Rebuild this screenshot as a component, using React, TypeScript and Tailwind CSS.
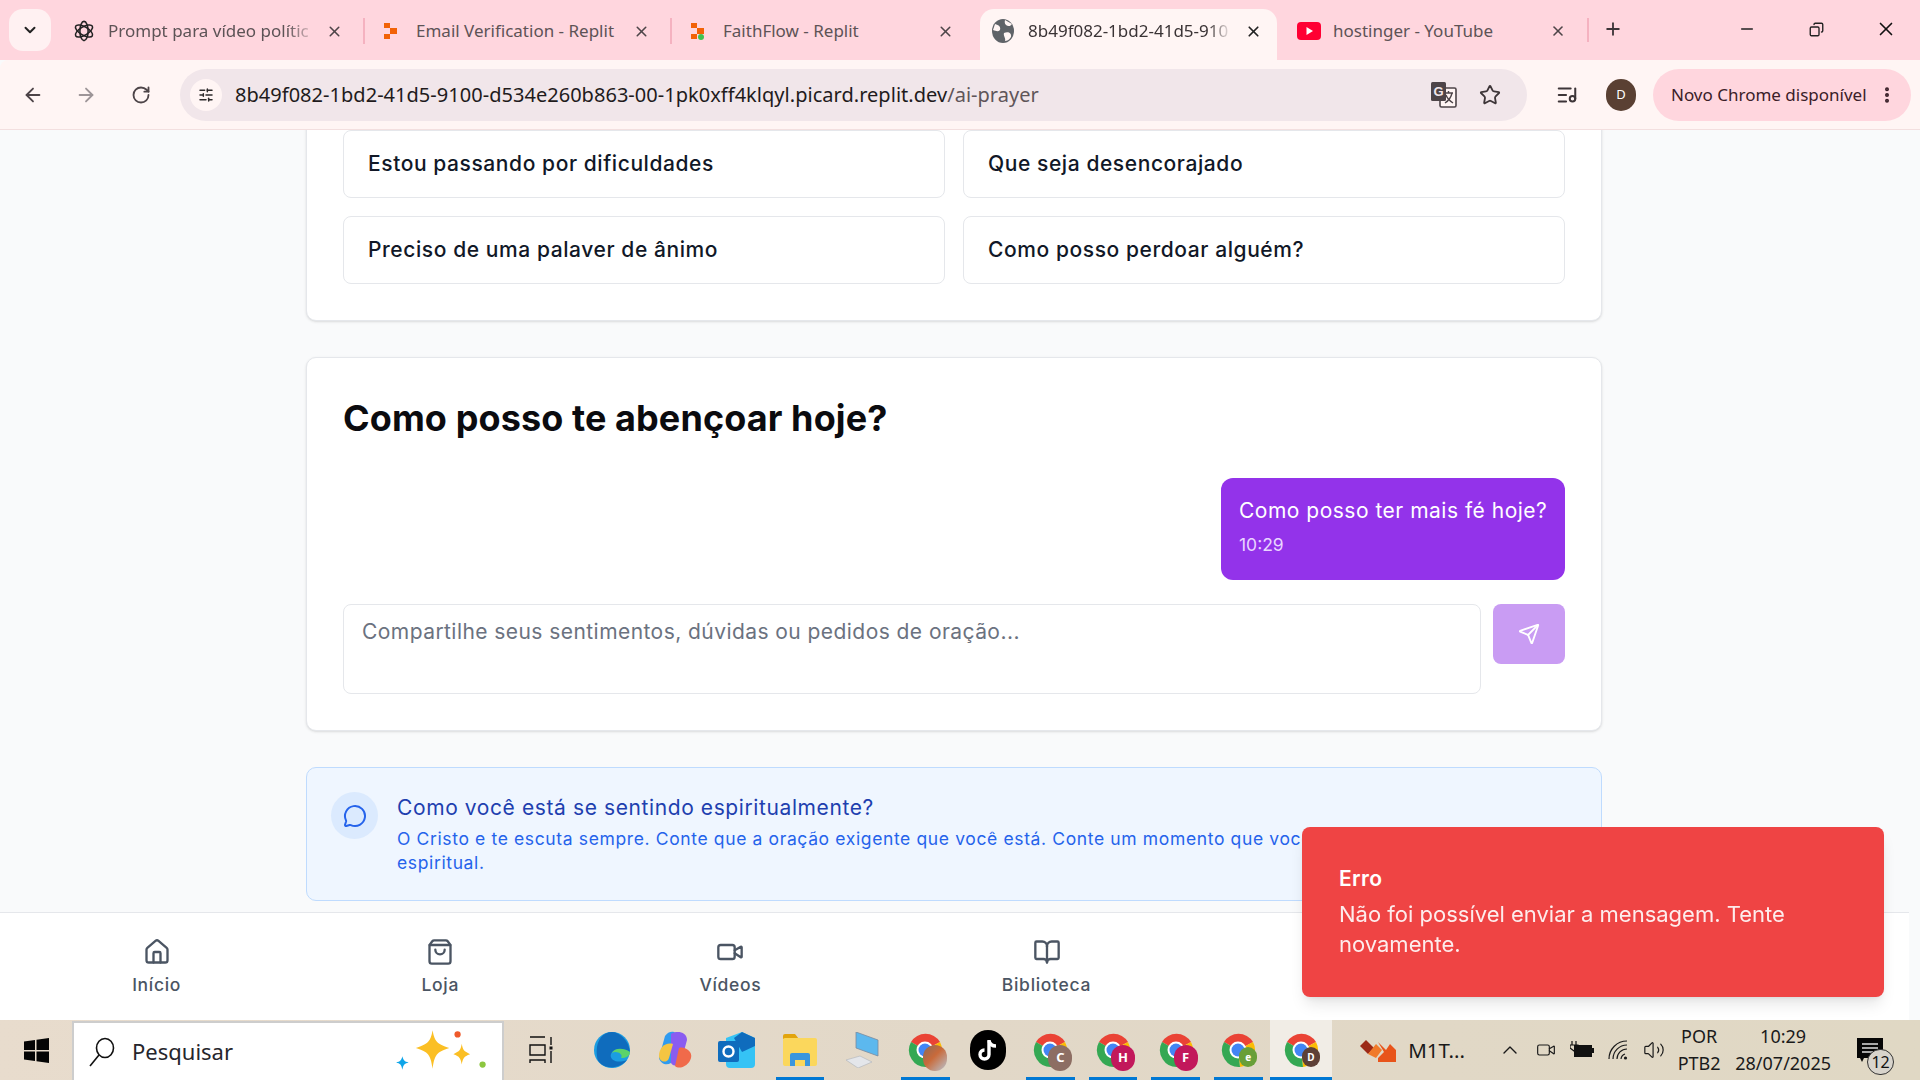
import React from "react";
import { Home, ShoppingBag, Video, BookOpen, MessageCircle, Send, ChevronDown, ArrowLeft, ArrowRight, RotateCw, X, Plus, Minus, Star, MoreVertical, ChevronUp, Volume2, SlidersHorizontal, ListMusic, Copy } from "lucide-react";

function ReplitLogo({ dot }: { dot?: boolean }) {
  return (
    <svg width="16" height="18" viewBox="0 0 16 18" className="shrink-0">
      <rect x="1" y="1" width="6" height="5" fill="#f26207" />
      <rect x="7" y="6" width="7" height="6" fill="#f26207" />
      <rect x="1" y="12" width="6" height="5" fill="#f26207" />
      {dot && <circle cx="11" cy="15" r="3" fill="#3fc24f" />}
    </svg>
  );
}

function OpenAILogo() {
  return (
    <svg width="22" height="24" viewBox="0 0 24 24" fill="none" stroke="#222" strokeWidth="1.7" className="shrink-0">
      <ellipse cx="12" cy="12" rx="4.5" ry="10.5" />
      <ellipse cx="12" cy="12" rx="4.5" ry="10.5" transform="rotate(60 12 12)" />
      <ellipse cx="12" cy="12" rx="4.5" ry="10.5" transform="rotate(120 12 12)" />
    </svg>
  );
}

function Tab({ icon, title, fade, sep, w, gap }: { icon: React.ReactNode; title: string; fade?: boolean; sep?: boolean; w: string; gap: string }) {
  return (
    <div className={`relative flex items-center h-[44px] ${w}`}>
      {icon}
      <span className={`${gap} flex-1 overflow-hidden whitespace-nowrap text-[17px] text-[#5d5356]`} style={fade ? { maskImage: "linear-gradient(to right, black 85%, transparent)" } : undefined}>{title}</span>
      <X size={17} strokeWidth={2.2} className="shrink-0 ml-[8px] mr-[2px] text-[#4d4448]" />
      {sep && <div className="absolute right-[-20px] top-[9px] h-[26px] w-[2px] bg-[#f5b2c0]" />}
    </div>
  );
}

function ChromeIcon({ letter, color, small, photo }: { letter?: string; color?: string; small?: boolean; photo?: boolean }) {
  return (
    <div className="relative w-[36px] h-[36px] shrink-0">
      <svg width="36" height="36" viewBox="0 0 36 36">
        <path d="M18 18 L4 10 A17 17 0 0 1 33 10 Z" fill="#ea4335" />
        <path d="M18 18 L33 10 A17 17 0 0 1 20 35 Z" fill="#fbbc04" />
        <path d="M18 18 L20 35 A17 17 0 0 1 4 10 Z" fill="#34a853" />
        <circle cx="18" cy="18" r="8.5" fill="#fff" />
        <circle cx="18" cy="18" r="6.5" fill="#4285f4" />
      </svg>
      {(letter || photo) && (
        <div className={`absolute flex items-center justify-center rounded-full text-white font-bold ${small ? "w-[18px] h-[20px] right-[-1px] bottom-[1px] text-[10px]" : "w-[24px] h-[26px] right-[-4px] bottom-[-3px] text-[13px]"}`} style={{ background: photo ? "linear-gradient(135deg,#8a6a5a,#c96a3a 45%,#b8c4d0)" : color }}>{letter}</div>
      )}
    </div>
  );
}

function TaskSlot({ children, line, active }: { children: React.ReactNode; line?: boolean; active?: boolean }) {
  return (
    <div className={`relative flex items-center justify-center h-full shrink-0 w-[62.6px] ${active ? "bg-[#f1ede6]" : ""}`}>
      {children}
      {line && <div className="absolute bottom-0 left-[7px] right-[7px] h-[3px] bg-[#0078d4]" style={active ? { left: 0, right: 0 } : undefined} />}
    </div>
  );
}

function NavItem({ icon, label, w }: { icon: React.ReactNode; label: string; w?: string }) {
  return (
    <div className={`flex flex-col items-center gap-[8px] text-[#4b5563] ${w ?? ""}`}>
      {icon}
      <span className="text-[17.5px] leading-[22px] font-medium tracking-[0.7px] whitespace-nowrap">{label}</span>
    </div>
  );
}

function TrayIcon({ children }: { children: React.ReactNode }) {
  return <div className="w-[36px] flex items-center justify-center shrink-0">{children}</div>;
}

const heading = { fontFamily: "Inter, sans-serif" };

export default function App() {
  return (
    <div className="w-[1920px] h-[1080px] overflow-hidden flex flex-col bg-[#f9fafb] relative" style={{ fontFamily: "'Noto Sans', sans-serif" }}>
      {/* tab strip */}
      <div className="h-[60px] bg-[#ffd6de] flex shrink-0 relative">
        <div className="absolute left-[9px] top-[9px] w-[42px] h-[42px] bg-[#fff1f2] rounded-[14px] flex items-center justify-center">
          <ChevronDown size={18} strokeWidth={2.6} className="text-[#222]" />
        </div>
        <div className="flex items-center ml-[73px] h-[44px] gap-[38px] mt-[9px]">
          <Tab w="w-[272px]" gap="ml-[13px]" icon={<OpenAILogo />} title="Prompt para vídeo polític" fade sep />
          <Tab w="w-[269px]" gap="ml-[17px]" icon={<ReplitLogo />} title="Email Verification - Replit" sep />
          <Tab w="w-[266px]" gap="ml-[17px]" icon={<ReplitLogo dot />} title="FaithFlow - Replit" />
        </div>
        <div className="absolute left-[980px] top-[9px] w-[297px] h-[51px] bg-[#fff5f4] rounded-t-[14px] flex items-center pl-[12px] pr-[15px] pb-[7px]">
          <svg width="22" height="24" viewBox="0 0 22 24" className="shrink-0">
            <ellipse cx="11" cy="12" rx="11" ry="12" fill="#5f6368" />
            <path d="M3 5 C7 6 9 8 8 11 C6 13 4 12 1 11 Z M13 1 C12 5 14 7 18 7 L20 5 Z M12 14 C16 12 20 14 19 18 C17 21 15 22 13 22 C14 19 11 17 12 14 Z" fill="#fff5f4" />
          </svg>
          <span className="ml-[14px] w-[204px] overflow-hidden whitespace-nowrap text-[17px] text-[#3a3335]" style={{ maskImage: "linear-gradient(to right, black 88%, transparent)" }}>8b49f082-1bd2-41d5-910</span>
          <span className="flex-1" />
          <X size={17} strokeWidth={2.4} className="shrink-0 text-[#222]" />
        </div>
        <div className="absolute left-[1297px] top-[15px] h-[32px] w-[271px] flex items-center">
          <svg width="24" height="18" viewBox="0 0 24 18" className="shrink-0"><rect width="24" height="18" rx="4" fill="#ff0033" /><path d="M9.5 5 L16 9 L9.5 13 Z" fill="#fff" /></svg>
          <span className="ml-[12px] text-[17px] text-[#5d5356] flex-1 whitespace-nowrap">hostinger - YouTube</span>
          <X size={16} strokeWidth={2.4} className="mr-[2px] text-[#4d4448]" />
        </div>
        <div className="absolute left-[1587px] top-[18px] w-[2px] h-[24px] bg-[#f5b2c0]" />
        <Plus size={20} strokeWidth={2.2} className="absolute left-[1603px] top-[19px] text-[#3d3538]" />
        <Minus size={18} strokeWidth={2.2} className="absolute left-[1738px] top-[20px] text-[#222]" />
        <Copy size={15} strokeWidth={2.2} className="absolute left-[1809px] top-[22px] text-[#222] -scale-x-100" />
        <X size={22} strokeWidth={1.8} className="absolute left-[1875px] top-[18px] text-[#111]" />
      </div>
      {/* toolbar */}
      <div className="h-[70px] bg-[#fff5f4] shrink-0 flex items-center border-b border-[#f3dfdf] rounded-tl-[8px]">
        <ArrowLeft size={22} strokeWidth={2} className="ml-[22px] text-[#4d4448]" />
        <ArrowRight size={22} strokeWidth={2} className="ml-[31px] text-[#9d9598]" />
        <RotateCw size={20} strokeWidth={2.2} className="ml-[34px] text-[#4d4448]" />
        <div className="ml-[29px] w-[1347px] h-[52px] rounded-full bg-[#f1e6ea] flex items-center pl-[10px] pr-[26px]">
          <div className="w-[32px] h-[32px] rounded-full bg-[#fff5f4] flex items-center justify-center shrink-0">
            <SlidersHorizontal size={16} strokeWidth={2.2} className="text-[#2d2a2b]" />
          </div>
          <span className="ml-[13px] flex-1 text-[20px] tracking-[0.03px] whitespace-nowrap text-[#1f1b1c]">8b49f082-1bd2-41d5-9100-d534e260b863-00-1pk0xff4klqyl.picard.replit.dev<span className="text-[#5f5559]">/ai-prayer</span></span>
          <svg width="27" height="27" viewBox="0 0 27 27" className="mr-[22px] shrink-0">
            <rect x="10" y="7" width="16" height="19" rx="1.5" fill="#fff5f4" stroke="#4d4448" strokeWidth="1.6" />
            <path d="M14 12 H23 M18.5 10 V12 M22 12 C21 17 18 20 15 22 M16 14 C17 17 20 20 23 22" stroke="#4d4448" strokeWidth="1.4" fill="none" />
            <rect x="1" y="1" width="15" height="19" rx="1.5" fill="#4d4448" />
            <text x="8.5" y="15" textAnchor="middle" fontSize="13" fontWeight="700" fill="#f1e6ea" fontFamily="'Liberation Sans', sans-serif">G</text>
          </svg>
          <Star size={22} strokeWidth={2} className="text-[#3d3538]" />
        </div>
        <ListMusic size={22} strokeWidth={2.2} className="ml-[29px] text-[#3d3538]" />
        <div className="ml-[28px] w-[30px] h-[32px] rounded-full bg-[#5a4033] text-white text-[13px] flex items-center justify-center">D</div>
        <div className="ml-[17px] w-[258px] h-[52px] rounded-full bg-[#ffd6de] flex items-center pl-[18px] text-[17px] text-[#3a2028] whitespace-nowrap">
          Novo Chrome disponível
          <MoreVertical size={20} strokeWidth={2.8} className="ml-[10px] text-[#3a2028]" />
        </div>
      </div>

      {/* page */}
      <div className="flex-1 min-h-0 overflow-hidden relative flex flex-col">
        <div className="flex-1 min-h-0 overflow-hidden">
          <div className="w-[1296px] ml-[306px] flex flex-col gap-[36px] -mt-[60px]" style={heading}>
            <div className="bg-white border border-[#e5e7eb] rounded-[10px] shadow-sm px-[36px] pt-[59px] pb-[36px] grid grid-cols-2 gap-x-[18px] gap-y-[18px]">
              {["Estou passando por dificuldades", "Que seja desencorajado", "Preciso de uma palaver de ânimo", "Como posso perdoar alguém?"].map((t) => (
                <div key={t} className="h-[68px] rounded-[8px] border border-[#e5e7eb] flex items-center pl-[24px] text-[21px] font-medium text-[#111827] tracking-[0.58px]">{t}</div>
              ))}
            </div>
            <div className="bg-white border border-[#e5e7eb] rounded-[10px] shadow-sm px-[36px] pt-[34px] pb-[36px] h-[374px] flex flex-col">
              <h2 className="text-[36px] leading-[52px] font-bold text-[#0b0b0f] tracking-[0.1px]">Como posso te abençoar hoje?</h2>
              <div className="flex justify-end mt-[34px]">
                <div className="w-[344px] h-[102px] rounded-[12px] bg-[#9333ea] pl-[18px] pt-[19px] text-white">
                  <div className="text-[21px] leading-[28px] whitespace-nowrap tracking-[0.5px]">Como posso ter mais fé hoje?</div>
                  <div className="text-[17.5px] leading-[24px] mt-[8px] text-[#e9d5ff]">10:29</div>
                </div>
              </div>
              <div className="flex items-start gap-[12px] mt-[24px]">
                <div className="flex-1 h-[90px] rounded-[8px] border border-[#e5e7eb] pl-[18px] pt-[13px] text-[21px] leading-[28px] tracking-[0.44px] text-[#6b7280]">Compartilhe seus sentimentos, dúvidas ou pedidos de oração...</div>
                <div className="w-[72px] h-[60px] rounded-[8px] bg-[#c99cf3] flex items-center justify-center">
                  <Send size={22} strokeWidth={2} className="text-white" />
                </div>
              </div>
            </div>
            <div className="bg-[#eff6ff] border border-[#bfdbfe] rounded-[10px] h-[134px] flex pl-[24px] pt-[24px]">
              <div className="w-[47px] h-[47px] rounded-full bg-[#dbeafe] flex items-center justify-center shrink-0">
                <MessageCircle size={24} strokeWidth={2} className="text-[#2563eb]" />
              </div>
              <div className="ml-[19px] pt-[1px]">
                <div className="text-[21px] leading-[30px] text-[#1e40af] tracking-[0.6px]">Como você está se sentindo espiritualmente?</div>
                <div className="text-[17.5px] leading-[24px] mt-[4px] text-[#2563eb] tracking-[0.63px] w-[1195px]">O Cristo e te escuta sempre. Conte que a oração exigente que você está. Conte um momento que você precisa de apoio e orientação espiritual.</div>
              </div>
            </div>
          </div>
        </div>
        {/* nav */}
        <div className="h-[108px] shrink-0 bg-white border-t border-[#e5e7eb] flex justify-around items-center w-[1909px] pl-[12px]" style={heading}>
          <NavItem icon={<Home size={28} strokeWidth={2} />} label="Início" />
          <NavItem icon={<ShoppingBag size={28} strokeWidth={2} />} label="Loja" />
          <NavItem icon={<Video size={28} strokeWidth={2} />} label="Vídeos" />
          <NavItem icon={<BookOpen size={28} strokeWidth={2} />} label="Biblioteca" />
          <NavItem icon={<BookOpen size={28} strokeWidth={2} />} label="Oração" w="w-[100px]" />
          <NavItem icon={<BookOpen size={28} strokeWidth={2} />} label="Perfil" w="w-[117px]" />
        </div>
        {/* toast */}
        <div className="absolute left-[1302px] top-[697px] w-[582px] h-[170px] rounded-[8px] bg-[#ef4444] text-white pl-[37px] pt-[37px] shadow-lg z-10" style={heading}>
          <div className="text-[21px] leading-[30px] font-semibold tracking-[0.4px]">Erro</div>
          <div className="text-[22px] leading-[30px] opacity-90 w-[490px] mt-[5px]">Não foi possível enviar a mensagem. Tente novamente.</div>
        </div>
      </div>

      {/* taskbar */}
      <div className="h-[60px] shrink-0 flex items-stretch bg-gradient-to-r from-[#e8dccd] via-[#e2d8c8] to-[#e0d8c4] text-[#111]">
        <div className="w-[72px] flex items-center justify-center shrink-0">
          <svg width="25" height="25" viewBox="0 0 25 25"><path d="M0 3.5 L11 2 V12 H0 Z M12.5 1.8 L25 0 V12 H12.5 Z M0 13.5 H11 V23 L0 21.5 Z M12.5 13.5 H25 V25 L12.5 23.2 Z" fill="#050505" /></svg>
        </div>
        <div className="w-[432px] bg-white border-2 border-b-0 border-[#cdcdcd] mt-[1px] flex items-center pl-[15px] relative shrink-0">
          <svg width="26" height="30" viewBox="0 0 26 30" fill="none" stroke="#111" strokeWidth="1.6" className="shrink-0">
            <ellipse cx="16" cy="11" rx="8.5" ry="9.5" />
            <path d="M10 18 L1 29" />
          </svg>
          <span className="ml-[17px] text-[22px] text-[#26262c]">Pesquisar</span>
          <svg width="96" height="50" viewBox="0 0 92 48" className="absolute right-[11px] top-[2px]">
            <path d="M36 5 C38 16 40 18 52 22 C40 26 38 28 36 42 C34 28 32 26 20 22 C32 18 34 16 36 5 Z" fill="#fbbf24" />
            <path d="M64 18 C65 24 66 25 72 28 C66 30 65 32 64 38 C63 32 62 30 56 28 C62 25 63 24 64 18 Z" fill="#fbbf24" />
            <path d="M7 30 C8 34 9 35 13 36 C9 37 8 38 7 43 C6 38 5 37 1 36 C5 35 6 34 7 30 Z" fill="#0ea5e9" />
            <circle cx="60" cy="9" r="3" fill="#ef5a2b" />
            <circle cx="84" cy="38" r="3" fill="#8cc63f" />
          </svg>
        </div>
        <div className="w-[77px] flex items-center justify-center shrink-0 pr-[4px]">
          <svg width="24" height="32" viewBox="0 0 24 32" fill="none" stroke="#111" strokeWidth="1.4">
            <path d="M1 3 H16 M1 29 V26 H16 V29 M1 11 H16 V21 H1 Z M22 3 V11 M22 17 V29" />
            <rect x="20.5" y="12.5" width="3" height="3" fill="#111" stroke="none" />
          </svg>
        </div>
        <div className="flex items-center shrink-0">
          <TaskSlot>
            <svg width="38" height="40" viewBox="0 0 38 40">
              <circle cx="19" cy="20" r="18" fill="#1b9de2" />
              <path d="M4 26 C4 38 24 42 34 30 C24 34 16 30 18 24 C20 18 30 18 37 22 C36 10 26 2 19 2 C9 2 2 12 4 26 Z" fill="#0f6cbd" />
              <path d="M37 22 C30 17 21 18 19 23 C23 20 31 24 28 28 C33 28 37 26 37 22 Z" fill="#5bd36a" />
            </svg>
          </TaskSlot>
          <TaskSlot>
            <svg width="36" height="40" viewBox="0 0 36 40">
              <path d="M8 6 C12 0 20 0 22 8 L16 30 C14 36 4 36 2 28 Z" fill="#2f9bf0" />
              <path d="M14 4 C20 0 30 2 30 10 L24 32 C22 38 12 36 14 30 Z" fill="#8a5cf0" />
              <path d="M2 26 C2 18 8 12 16 14 L12 28 C10 34 2 32 2 26 Z" fill="#f5c542" />
              <path d="M22 18 C28 16 36 22 34 28 C32 36 22 40 18 36 Z" fill="#f06a4a" />
            </svg>
          </TaskSlot>
          <TaskSlot>
            <svg width="38" height="36" viewBox="0 0 38 36">
              <path d="M8 6 L24 0 L37 6 V32 Q37 36 33 36 H12 Q8 36 8 32 Z" fill="#35c3f5" />
              <path d="M16 6 L24 0 L37 6 V14 L24 20 Z" fill="#0f6cbd" />
              <rect x="0" y="9" width="21" height="21" rx="2" fill="#0f6cbd" />
              <circle cx="10.5" cy="19.5" r="5" fill="none" stroke="#fff" strokeWidth="2.4" />
            </svg>
          </TaskSlot>
          <TaskSlot line>
            <svg width="34" height="32" viewBox="0 0 34 32">
              <path d="M0 2 Q0 0 2 0 H12 L16 5 H0 Z" fill="#e2a40d" />
              <rect y="4" width="34" height="28" rx="2" fill="#fbd75c" />
              <path d="M7 32 V21 Q7 19 9 19 H25 Q27 19 27 21 V32 H22 V26 H12 V32 Z" fill="#3a96dd" />
            </svg>
          </TaskSlot>
          <TaskSlot>
            <svg width="34" height="36" viewBox="0 0 34 36">
              <path d="M10 0 L32 8 V24 L10 16 Z" fill="#5cb8ee" stroke="#7a8aa0" strokeWidth="0.8" />
              <path d="M0 28 L14 24 L26 30 L12 36 Z" fill="#e4e6ea" stroke="#aeb4ba" strokeWidth="0.6" />
            </svg>
          </TaskSlot>
          <TaskSlot line><ChromeIcon photo /></TaskSlot>
          <TaskSlot>
            <div className="w-[36px] h-[40px] rounded-full bg-black flex items-center justify-center">
              <svg width="20" height="24" viewBox="0 0 20 24" fill="none" stroke="#fff" strokeWidth="3.4">
                <path d="M11 2 V16.5 A4.5 4.5 0 1 1 6.5 12" />
                <path d="M11 3 C12 7 15 8 18 8" />
              </svg>
            </div>
          </TaskSlot>
          <TaskSlot line><ChromeIcon letter="C" color="#8d6e63" /></TaskSlot>
          <TaskSlot line><ChromeIcon letter="H" color="#c2185b" /></TaskSlot>
          <TaskSlot line><ChromeIcon letter="F" color="#c2185b" /></TaskSlot>
          <TaskSlot line><ChromeIcon letter="e" color="#689f38" small /></TaskSlot>
          <TaskSlot line active><ChromeIcon letter="D" color="#5d4037" small /></TaskSlot>
        </div>
        <div className="flex items-center ml-[28px] shrink-0">
          <svg width="36" height="24" viewBox="0 0 36 24">
            <path d="M0 8 L6 2 L14 10 L8 16 Z" fill="#9c2a17" />
            <path d="M8 16 L16 6 L22 12 L16 20 Z" fill="#f07a2a" />
            <path d="M18 4 L26 12 L30 6 L36 12 V24 H18 V20 L24 14 Z" fill="#e8541a" />
          </svg>
          <span className="ml-[12px] text-[20.5px] text-[#1a1a1a] w-[84px] whitespace-nowrap">M1T...</span>
        </div>
        <div className="flex items-center shrink-0 text-[#1a1a1a]">
          <TrayIcon><ChevronUp size={24} strokeWidth={1.4} /></TrayIcon>
          <TrayIcon><Video size={20} strokeWidth={1.4} /></TrayIcon>
          <TrayIcon>
            <svg width="24" height="20" viewBox="0 0 24 20">
              <rect x="4" y="5" width="18" height="12" fill="#111" />
              <rect x="22" y="8" width="2" height="5" fill="#111" />
              <path d="M2 1 V5 M6 1 V5 M0 5 H8 V8 L4 11 L0 8 Z" stroke="#111" fill="none" strokeWidth="1.2" />
            </svg>
          </TrayIcon>
          <TrayIcon>
            <svg width="20" height="20" viewBox="0 0 20 20" fill="none" stroke="#1a1a1a" strokeWidth="1.2">
              <path d="M1 19 A18 18 0 0 1 19 1 M5 19 A14 14 0 0 1 19 5 M9 19 A10 10 0 0 1 19 9 M13 19 A6 6 0 0 1 17 14" />
              <circle cx="17.5" cy="18" r="1.6" fill="#1a1a1a" stroke="none" />
            </svg>
          </TrayIcon>
          <TrayIcon><Volume2 size={22} strokeWidth={1.3} /></TrayIcon>
        </div>
        <div className="ml-[7px] flex flex-col items-center justify-center text-[18px] leading-[27px] text-[#1a1a1a] w-[40px] shrink-0">
          <span>POR</span><span>PTB2</span>
        </div>
        <div className="ml-[17px] flex flex-col items-center justify-center text-[18px] leading-[27px] text-[#1a1a1a] w-[94px] shrink-0">
          <span>10:29</span><span>28/07/2025</span>
        </div>
        <div className="relative ml-[27px] flex items-center shrink-0">
          <svg width="26" height="24" viewBox="0 0 26 24"><path d="M0 0 H26 V20 H7 L5 24 L3 20 H0 Z" fill="#060606" /><path d="M5 6 H21 M5 10 H21 M5 14 H21" stroke="#ddd" strokeWidth="1.4" /></svg>
          <div className="absolute left-[10px] top-[29px] w-[27px] h-[26px] rounded-full bg-[#d8d4cc] border border-[#333] flex items-center justify-center text-[16px] text-[#111]">12</div>
        </div>
      </div>
    </div>
  );
}
